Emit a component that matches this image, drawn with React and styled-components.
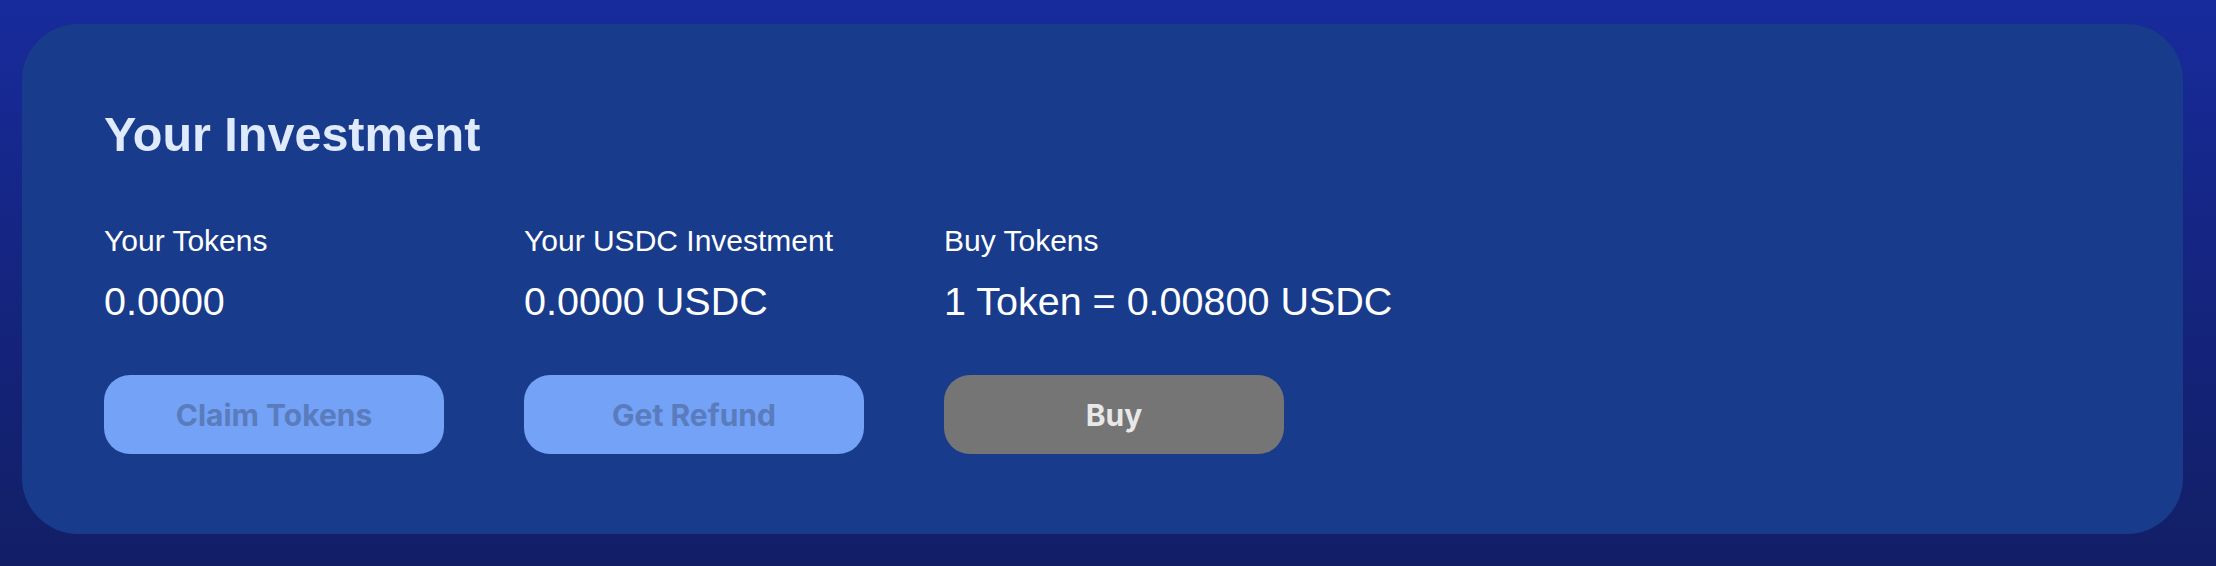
import React from "react";
import styled, { createGlobalStyle } from "styled-components";

const GlobalStyle = createGlobalStyle`
  html, body {
    margin: 0;
    padding: 0;
  }
  body {
    font-family: "Liberation Sans", Arial, sans-serif;
    background: linear-gradient(180deg, #172b9c 0%, #15247f 50%, #121f66 100%);
    min-height: 566px;
  }
`;

const Page = styled.main`
  box-sizing: border-box;
  min-height: 566px;
  padding: 24px 33px 32px 22px;
`;

const Card = styled.section`
  box-sizing: border-box;
  background: #183b8c;
  border-radius: 56px;
  padding: 83px 82px 79px;
  height: 510px;
`;

const Title = styled.h2`
  margin: 0 0 63px;
  font-size: 48.5px;
  font-weight: 700;
  line-height: 55px;
  color: #dfeafd;
`;

const Grid = styled.div`
  display: grid;
  grid-template-columns: repeat(3, 340px);
  column-gap: 80px;
`;

const Column = styled.div`
  display: flex;
  flex-direction: column;
`;

const Label = styled.div`
  font-size: 30px;
  line-height: 32px;
  color: #ffffff;
`;

const Value = styled.div`
  margin-top: 22px;
  font-size: 39.5px;
  line-height: 45px;
  white-space: nowrap;
  color: #ffffff;
`;

const Button = styled.button`
  box-sizing: border-box;
  margin-top: 51px;
  width: 340px;
  height: 79px;
  border: none;
  border-radius: 26px;
  font-family: Inter, "Open Sans", sans-serif;
  font-size: 30px;
  font-weight: 700;
  background: ${(p) => (p.$variant === "buy" ? "#757575" : "#73a2f7")};
  color: ${(p) => (p.$variant === "buy" ? "#e8e8e8" : "#5a7cbc")};
  cursor: ${(p) => (p.$variant === "buy" ? "pointer" : "default")};
`;

const items = [
  { label: "Your Tokens", value: "0.0000", action: "Claim Tokens" },
  { label: "Your USDC Investment", value: "0.0000 USDC", action: "Get Refund" },
  { label: "Buy Tokens", value: "1 Token = 0.00800 USDC", action: "Buy", variant: "buy" },
];

export default function App() {
  return (
    <>
      <GlobalStyle />
      <Page>
        <Card>
          <Title>Your Investment</Title>
          <Grid>
            {items.map((item) => (
              <Column key={item.label}>
                <Label>{item.label}</Label>
                <Value>{item.value}</Value>
                <Button $variant={item.variant} disabled={!item.variant}>
                  {item.action}
                </Button>
              </Column>
            ))}
          </Grid>
        </Card>
      </Page>
    </>
  );
}
